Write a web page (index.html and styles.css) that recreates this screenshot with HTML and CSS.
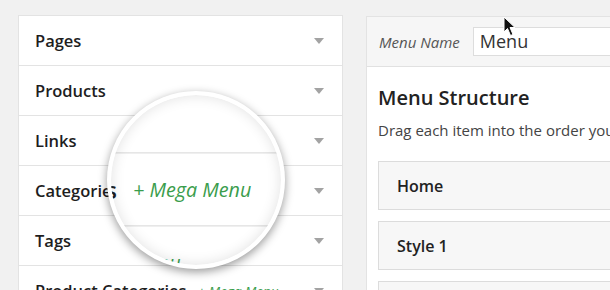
FILE: index.html
```html
<!DOCTYPE html>
<html lang="en">
<head>
  <meta charset="UTF-8" />
  <title>Menus</title>
  <link rel="stylesheet" href="styles.css">
</head>
<body>
  <div class="screen">
    <div class="accordion">
      <div class="section"><span class="title">Pages</span><span class="arrow"></span></div>
      <div class="section"><span class="title">Products</span><span class="arrow"></span></div>
      <div class="section"><span class="title">Links</span><span class="arrow"></span></div>
      <div class="section"><span class="title">Categories</span><span class="arrow"></span></div>
      <div class="section"><span class="title">Tags</span><span class="arrow"></span></div>
      <div class="section"><span class="title">Product Categories</span><span class="mega">+ Mega Menu</span><span class="arrow"></span></div>
    </div>

    <div class="menu-panel">
      <div class="menu-header">
        <label class="menu-label">Menu Name</label>
        <div class="menu-input">Menu</div>
      </div>
      <div class="menu-body">
        <h2>Menu Structure</h2>
        <p>Drag each item into the order you prefer.</p>
        <div class="menu-item">Home</div>
        <div class="menu-item">Style 1</div>
        <div class="menu-item">Style 2</div>
      </div>
    </div>
  </div>

  <!-- magnifier over the accordion -->
  <div class="lens">
    <div class="lens-view">
      <div class="accordion">
        <div class="section"><span class="title">Pages</span><span class="arrow"></span></div>
        <div class="section"><span class="title">Products</span><span class="arrow"></span></div>
        <div class="section"><span class="title">Links</span><span class="arrow"></span></div>
        <div class="section"><span class="title">Categories</span><span class="mega">+ Mega Menu</span><span class="arrow"></span></div>
        <div class="section"><span class="title">Tags</span><span class="mega">+ Mega Menu</span><span class="arrow"></span></div>
        <div class="section"><span class="title">Product Categories</span><span class="mega">+ Mega Menu</span><span class="arrow"></span></div>
      </div>
    </div>
  </div>

  <svg class="cursor" width="14" height="21" viewBox="0 0 14 21">
    <path d="M1 1 L1 16 L4.5 12.5 L7.5 19.5 L10 18.5 L7 11.5 L12 11.5 Z" fill="#111" stroke="#fff" stroke-width="1" stroke-linejoin="round"/>
  </svg>
</body>
</html>
```

FILE: styles.css
```css
body {
  margin: 0;
  width: 610px;
  height: 290px;
  overflow: hidden;
  background: #f1f1f1;
  font-family: 'Open Sans', 'Liberation Sans', sans-serif;
  color: #222;
}

.screen {
  display: flex;
  align-items: flex-start;
  gap: 23px;
  padding: 15px 0 0 18px;
}

.accordion {
  width: 325px;
  flex-shrink: 0;
  background: #fff;
  border: 1px solid #e3e3e3;
  box-sizing: border-box;
}

.section {
  display: flex;
  align-items: center;
  height: 49px;
  padding: 0 18px 0 16px;
  border-bottom: 1px solid #e3e3e3;
}

.title {
  font-size: 16.5px;
  font-weight: 600;
  color: #1e1e1e;
}

.mega {
  margin-left: 11px;
  font-size: 13.5px;
  font-style: italic;
  color: #3a9d4c;
}

.arrow {
  margin-left: auto;
  width: 0;
  height: 0;
  border-left: 5px solid transparent;
  border-right: 5px solid transparent;
  border-top: 6px solid #a3a3a3;
}

.menu-panel {
  width: 300px;
  flex-shrink: 0;
  margin-top: 1px;
  background: #fff;
  border: 1px solid #e3e3e3;
}

.menu-header {
  display: flex;
  align-items: center;
  gap: 13px;
  height: 49px;
  padding: 0 12px;
  background: #f6f6f6;
  border-bottom: 1px solid #e1e1e1;
}

.menu-label {
  font-size: 15px;
  font-style: italic;
  color: #555;
}

.menu-input {
  flex: 1;
  height: 27px;
  line-height: 27px;
  padding: 0 6px;
  margin-right: -20px;
  background: #fff;
  border: 1px solid #ddd;
  font-size: 18px;
  color: #333;
}

.menu-body {
  padding: 16px 0 0 11px;
}

.menu-body h2 {
  margin: 0;
  font-size: 20px;
  font-weight: 600;
  line-height: 30px;
  color: #222;
}

.menu-body p {
  margin: 5px 0 19px;
  font-size: 15px;
  line-height: 24px;
  color: #444;
  white-space: nowrap;
}

.menu-item {
  display: flex;
  align-items: center;
  height: 47px;
  margin-bottom: 11px;
  padding: 0 18px;
  background: #f7f7f7;
  border: 1px solid #dcdcdc;
  font-size: 16px;
  font-weight: 600;
  color: #222;
}

.lens {
  position: absolute;
  left: 107px;
  top: 91px;
  width: 178px;
  height: 178px;
  box-sizing: border-box;
  border: 4px solid #fff;
  border-radius: 50%;
  overflow: hidden;
  background: #fff;
  box-shadow: 0 3px 10px rgba(0, 0, 0, 0.4);
}

.lens-view {
  position: absolute;
  left: -93px;
  top: -80px;
  transform-origin: 107px 178px;
  transform: scale(1.46);
}

.lens::after {
  content: "";
  position: absolute;
  inset: 0;
  border-radius: 50%;
  box-shadow: inset 0 0 14px rgba(0, 0, 0, 0.12);
}

.cursor {
  position: absolute;
  left: 503px;
  top: 16px;
}
```
